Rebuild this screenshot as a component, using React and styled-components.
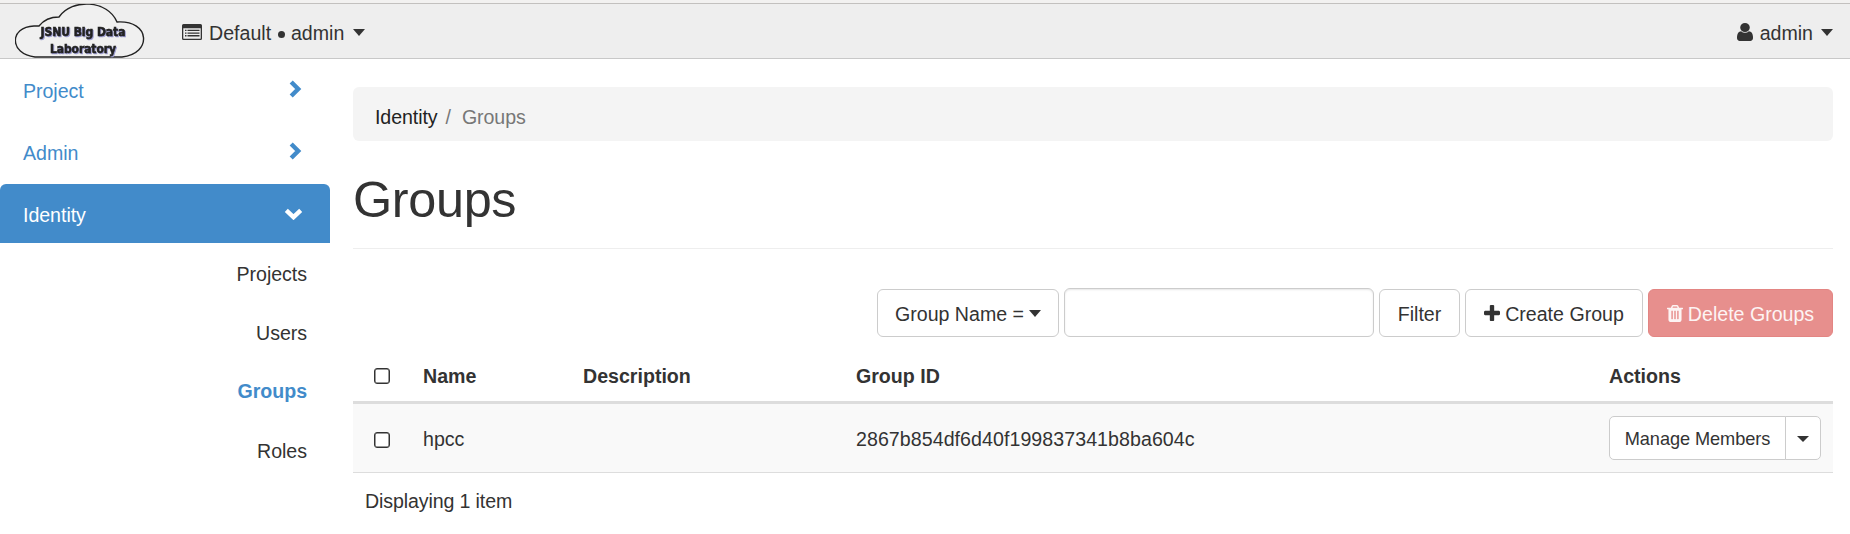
import React from 'react';
import styled, { createGlobalStyle } from 'styled-components';

const Global = createGlobalStyle`
  * { box-sizing: border-box; }
  body {
    margin: 0;
    background: #fff;
    color: #333;
    font: 19.6px/28px "Liberation Sans", Arial, sans-serif;
  }
`;

const TopStrip = styled.div`
  background: #f2f1f0;
  display: flow-root;
`;
const Navbar = styled.header`
  height: 56px;
  margin-top: 3px;
  border-top: 1px solid #c2c0be;
  border-bottom: 1px solid #c8c8c8;
  background: #eee;
  display: flex;
  align-items: center;
`;
const Logo = styled.svg`
  width: 130px;
  height: 54px;
  margin-left: 15px;
`;
const LogoText = styled.g`
  font: 700 12.8px "DejaVu Sans Condensed", "DejaVu Sans", sans-serif;
  fill: #222;
  stroke: #222;
  stroke-width: 0.6px;
  filter: drop-shadow(1px 1px 0 #9a9ad0);
`;
const NavLink = styled.a`
  display: flex;
  align-items: center;
  gap: 7px;
  margin-left: ${(p) => (p.$right ? 'auto' : '37px')};
  margin-right: ${(p) => (p.$right ? '17px' : '0')};
  padding-top: 3px;
`;
const Bullet = styled.span`
  display: inline-block;
  width: 7px;
  height: 7px;
  margin: 0 1px;
  vertical-align: 2px;
  border-radius: 50%;
  background: #333;
`;
const Caret = styled.span`
  width: 0;
  height: 0;
  flex: none;
  border-style: solid;
  border-color: #333 transparent transparent;
  border-width: ${(p) => (p.$small ? '6px 6px 0' : '7px 6px 0')};
  margin-left: ${(p) => p.$gap || 0}px;
  margin-bottom: 1px;
`;
const Icon = styled.svg`
  width: ${(p) => p.$w}px;
  height: ${(p) => p.$h || p.$w}px;
  margin-bottom: ${(p) => p.$lift || 0}px;
  fill: currentColor;
  flex: none;
`;

const Layout = styled.div`
  display: flex;
  align-items: flex-start;
`;
const Sidebar = styled.nav`
  width: 330px;
  flex: none;
  letter-spacing: -0.04px;
`;
const Panel = styled.a`
  display: flex;
  align-items: center;
  justify-content: space-between;
  height: 59px;
  margin-top: ${(p) => (p.$open ? 4 : 0)}px;
  margin-bottom: ${(p) => (p.$open ? 2 : 3)}px;
  padding: ${(p) => (p.$open ? '2px 27px 0 23px' : '4px 28px 0 23px')};
  color: ${(p) => (p.$open ? '#fff' : '#428bca')};
  background: ${(p) => (p.$open ? '#428bca' : 'transparent')};
  border-radius: 6px 6px 0 0;
  &:nth-child(2) { margin-bottom: 0; }
`;
const Item = styled.a`
  display: block;
  height: 59px;
  line-height: ${(p) => (p.$active ? 57 : 59)}px;
  padding-right: 23px;
  text-align: right;
  color: ${(p) => (p.$active ? '#428bca' : '#333')};
  font-weight: ${(p) => (p.$active ? 700 : 400)};
`;

const Main = styled.main`
  flex: 1;
  padding: 28px 17px 0 23px;
`;
const Breadcrumb = styled.div`
  display: flex;
  align-items: center;
  height: 54px;
  padding: 5px 22px 0;
  background: #f4f4f4;
  border-radius: 6px;
  color: #777;
  letter-spacing: -0.08px;
`;
const Crumb = styled.span`
  color: #222;
`;
const Slash = styled.span`
  padding: 0 11px 0 8px;
`;
const Title = styled.h1`
  margin: 0;
  padding-top: 31px;
  height: 108px;
  border-bottom: 1px solid #eee;
  font-size: 50.4px;
  line-height: 55px;
  font-weight: 400;
  letter-spacing: -0.35px;
`;
const Toolbar = styled.div`
  display: flex;
  justify-content: flex-end;
  align-items: flex-end;
  gap: 5px;
  margin-top: 39px;
  height: 49px;
`;
const Button = styled.button`
  display: flex;
  align-items: center;
  justify-content: center;
  gap: 5px;
  width: ${(p) => p.$w}px;
  height: ${(p) => p.$h || 48}px;
  padding: 2px 0 0;
  font: inherit;
  font-size: ${(p) => p.$size || 19.6}px;
  letter-spacing: ${(p) => (p.$size ? -0.08 : 0)}px;
  white-space: nowrap;
  color: ${(p) => (p.$danger ? '#fdf4f4' : '#333')};
  background: ${(p) => (p.$danger ? '#e78f8d' : '#fff')};
  border: 1px solid ${(p) => (p.$danger ? '#e38583' : '#ccc')};
  border-radius: 6px;
`;
const Search = styled.input`
  width: 310px;
  height: 49px;
  border: 1px solid #ccc;
  border-radius: 6px;
  box-shadow: inset 0 1px 2px rgba(0, 0, 0, 0.1);
`;
const Row = styled.div`
  display: grid;
  grid-template-columns: 70px 160px 273px 753px 1fr;
  align-items: center;
  height: ${(p) => (p.$head ? 67 : 69)}px;
  padding-top: ${(p) => (p.$head ? 12 : 0)}px;
  font-weight: ${(p) => (p.$head ? 700 : 400)};
  background: ${(p) => (p.$head ? '#fff' : '#f9f9f9')};
  border-bottom: ${(p) => (p.$head ? 3 : 1)}px solid #ddd;
`;
const Cell = styled.div`
  padding-top: 2px;
  letter-spacing: ${(p) => p.$track || 0}px;
`;
const Check = styled.input`
  appearance: none;
  display: block;
  width: 16px;
  height: 16px;
  margin: ${(p) => (p.$head ? 2 : 4)}px 0 0 21px;
  border: 1px solid #333;
  box-shadow: inset 0 0 0 0.5px #333;
  border-radius: 3px;
  background: #fff;
`;
const ButtonGroup = styled.div`
  display: flex;
  & > :first-child { border-radius: 5px 0 0 5px; }
  & > :last-child { border-radius: 0 5px 5px 0; margin-left: -1px; }
`;
const Footer = styled.div`
  padding: 14px 12px;
  letter-spacing: -0.12px;
`;

const Chevron = ({ down }) => (
  <Icon $w={down ? 19 : 13} $h={down ? 12 : 18} $lift={down ? 1 : 4} viewBox={down ? '0 0 19 12' : '0 0 13 18'}>
    <path
      d={down ? 'M2.3 2.4 9.5 9.2 16.7 2.4' : 'M2.2 2 9.2 9 2.2 16'}
      fill="none"
      stroke="currentColor"
      strokeWidth="4.4"
    />
  </Icon>
);

export default function App() {
  return (
    <>
      <Global />
      <TopStrip>
        <Navbar>
          <Logo viewBox="0 0 130 54">
            <path
              d="M20 53C-6 50-6 23 19 22Q22 22 24 22Q31 13 44 13C57-6 93-4 102 18C136 16 137 50 107 53Z"
              fill="#f0f0f0"
              stroke="#222"
              strokeWidth="1.4"
            />
            <LogoText>
              <text x="25.5" y="32" textLength="85" lengthAdjust="spacingAndGlyphs">JSNU Big Data</text>
              <text x="35" y="49" textLength="66" lengthAdjust="spacingAndGlyphs">Laboratory</text>
            </LogoText>
          </Logo>
          <NavLink>
            <Icon $w={20} $h={16} $lift={1} viewBox="0 0 20 16">
              <path fillRule="evenodd" d="M1.5 0h17A1.5 1.5 0 0 1 20 1.5v13a1.5 1.5 0 0 1-1.5 1.5h-17A1.5 1.5 0 0 1 0 14.5v-13A1.5 1.5 0 0 1 1.5 0zM1.3 4.3v9.9q0 .5.5.5h16.4q.5 0 .5-.5V4.3z" />
              <path d="M3 5.7h1.5V7H3zM5.5 5.7H17.5V7H5.5zM3 8.4h1.5v1.3H3zM5.5 8.4H17.5v1.3H5.5zM3 11.1h1.5v1.3H3zM5.5 11.1H17.5v1.3H5.5z" />
            </Icon>
            <span>Default <Bullet /> admin</span>
            <Caret $gap={2} />
          </NavLink>
          <NavLink $right>
            <Icon $w={16} $h={18} $lift={1} viewBox="256 128 1280 1536" preserveAspectRatio="none">
              <path d="M1536 1399q0 109-62.5 187t-150.5 78h-854q-88 0-150.5-78t-62.5-187q0-85 8.5-160.5t31.5-152 58.5-131 94-89 134.5-34.5q131 128 313 128t313-128q76 0 134.5 34.5t94 89 58.5 131 31.5 152 8.5 160.5zm-256-887q0 159-112.5 271.5t-271.5 112.5-271.5-112.5-112.5-271.5 112.5-271.5 271.5-112.5 271.5 112.5 112.5 271.5z" />
            </Icon>
            <span>admin</span>
            <Caret $gap={1} />
          </NavLink>
        </Navbar>
      </TopStrip>
      <Layout>
        <Sidebar>
          <Panel>Project<Chevron /></Panel>
          <Panel>Admin<Chevron /></Panel>
          <Panel $open>Identity<Chevron down /></Panel>
          <Item>Projects</Item>
          <Item>Users</Item>
          <Item $active>Groups</Item>
          <Item>Roles</Item>
        </Sidebar>
        <Main>
          <Breadcrumb><Crumb>Identity</Crumb><Slash>/</Slash>Groups</Breadcrumb>
          <Title>Groups</Title>
          <Toolbar>
            <Button $w={182}>Group Name =<Caret /></Button>
            <Search type="text" />
            <Button $w={81}>Filter</Button>
            <Button $w={178}>
              <Icon $w={16} $lift={2} viewBox="192 128 1408 1408">
                <path d="M1600 736v192q0 40-28 68t-68 28h-416v416q0 40-28 68t-68 28h-192q-40 0-68-28t-28-68v-416h-416q-40 0-68-28t-28-68v-192q0-40 28-68t68-28h416v-416q0-40 28-68t68-28h192q40 0 68 28t28 68v416h416q40 0 68 28t28 68z" />
              </Icon>
              Create Group
            </Button>
            <Button $w={185} $danger>
              <Icon $w={16} $h={17} $lift={1} viewBox="192 128 1408 1536" preserveAspectRatio="none">
                <path d="M704 1376v-704q0-14-9-23t-23-9h-64q-14 0-23 9t-9 23v704q0 14 9 23t23 9h64q14 0 23-9t9-23zm256 0v-704q0-14-9-23t-23-9h-64q-14 0-23 9t-9 23v704q0 14 9 23t23 9h64q14 0 23-9t9-23zm256 0v-704q0-14-9-23t-23-9h-64q-14 0-23 9t-9 23v704q0 14 9 23t23 9h64q14 0 23-9t9-23zm-544-992h448l-48-117q-7-9-17-11h-317q-10 2-17 11zm928 32v64q0 14-9 23t-23 9h-96v948q0 83-47 143.5t-113 60.5h-832q-66 0-113-58.5t-47-141.5v-952h-96q-14 0-23-9t-9-23v-64q0-14 9-23t23-9h309l70-167q15-37 54-63t79-26h320q40 0 79 26t54 63l70 167h309q14 0 23 9t9 23z" />
              </Icon>
              Delete Groups
            </Button>
          </Toolbar>
          <Row $head>
            <Check type="checkbox" $head />
            <Cell>Name</Cell>
            <Cell>Description</Cell>
            <Cell>Group ID</Cell>
            <Cell>Actions</Cell>
          </Row>
          <Row>
            <Check type="checkbox" />
            <Cell>hpcc</Cell>
            <Cell />
            <Cell $track={0.06}>2867b854df6d40f199837341b8ba604c</Cell>
            <ButtonGroup>
              <Button $w={177} $h={44} $size={18.2}>Manage Members</Button>
              <Button $w={36} $h={44}><Caret $small /></Button>
            </ButtonGroup>
          </Row>
          <Footer>Displaying 1 item</Footer>
        </Main>
      </Layout>
    </>
  );
}
